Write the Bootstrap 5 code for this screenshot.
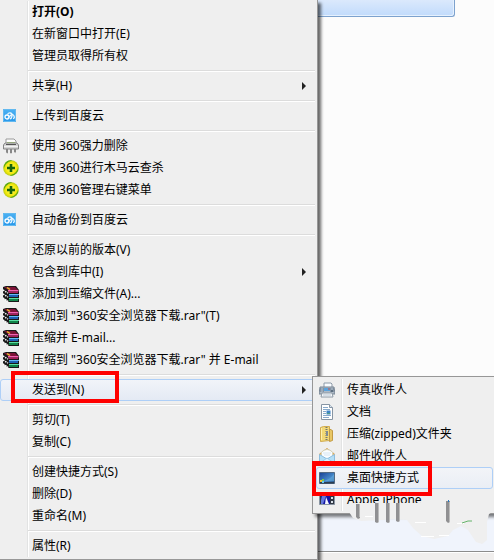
<!DOCTYPE html>
<html lang="zh-CN">
<head>
<meta charset="utf-8">
<meta name="viewport" content="width=device-width, initial-scale=1">
<title>右键菜单</title>
<link href="https://cdn.jsdelivr.net/npm/bootstrap@5.3.0/dist/css/bootstrap.min.css" rel="stylesheet">
<style>
body{font-family:"Noto Sans","Noto Sans CJK SC",sans-serif;font-size:12px;line-height:20px;color:#000;background:#fcfcfc;overflow:hidden}
.menu{background:#efefef;border-right:1px solid #979797;border-bottom:1px solid #979797;padding:1px 2px 2px 0;box-shadow:3px 3px 3px rgba(0,0,0,.6);flex:0 0 318px;z-index:2}
.gutter{background:linear-gradient(90deg,transparent 27px,#e2e3e3 27px,#e2e3e3 28px,#fff 28px,#fff 29px,transparent 29px)}
.entry{height:22px;padding:0 8px 0 0;color:#000;border:1px solid transparent;background:transparent;white-space:nowrap;text-align:left;border-radius:3px}
.entry .ico{width:31px;height:18px;padding-left:2px;flex:none;display:flex;align-items:center}
.entry.hot{border-color:#aecff7;background:linear-gradient(#f1f4f9,#e4eaf4)}
.rule{height:8px;padding:3px 0 0 28px}
.rule hr{margin:0;border:0;border-top:1px solid #dcdcdc;border-bottom:1px solid #fff;opacity:1}
.arrow{width:0;height:0;border:4px solid transparent;border-left-color:#222;border-right:0;margin-left:auto}
.picked{height:17px;margin-right:39px;border:1px solid #7da2ce;border-width:0 1px 1px 0;border-radius:0 0 3px 0;background:linear-gradient(#dbe9fc,#c1dbfc);box-shadow:inset -1px -1px 0 #e6f1fe}
.details{height:38px;background:#f0f4fc;border-bottom:1px solid #8c8c8c}
.status{height:8px;background:#f0eeed;border-top:1px solid #fff}
.flyout{top:379px;z-index:3}
.submenu{position:absolute;left:312px;top:-3px;right:-3px;background:#efefef;border:1px solid #979797;padding:2px 3px 2px;z-index:3;box-shadow:3px 3px 3px rgba(0,0,0,.5)}
.submenu .gutter{background:linear-gradient(90deg,transparent 25px,#e2e3e3 25px,#e2e3e3 26px,#fff 26px,#fff 27px,transparent 27px)}
.submenu .ico{width:30px}
.submenu .hot{background:linear-gradient(#f2f4f8,#eaeef5)}
.sendto{height:22px}
.callout{position:absolute;border:4px solid #f00;pointer-events:none;z-index:5}
.callout-send{left:11px;top:-8px;width:108px;height:32px}
.callout-desk{left:-1px;top:84px;width:120px;height:35px;border-width:5px 4px 4px}
.smear{position:absolute;left:31px;top:121px;z-index:4;pointer-events:none}
.symbols{width:0;height:0}
</style>
<script src="https://cdn.jsdelivr.net/npm/bootstrap@5.3.0/dist/js/bootstrap.bundle.min.js"></script>
</head>
<body>
<svg class="symbols position-absolute" aria-hidden="true">
<linearGradient id="gb" x2="0" y2="1"><stop stop-color="#4db2f3"/><stop offset="1" stop-color="#2797ea"/></linearGradient>
<linearGradient id="gs" x2="1" y2="1"><stop stop-color="#173f94"/><stop offset=".6" stop-color="#4689c9"/><stop offset="1" stop-color="#245082"/></linearGradient>
<radialGradient id="gy"><stop stop-color="#ffff65"/><stop offset=".7" stop-color="#f4e90d"/><stop offset="1" stop-color="#b8ca12"/></radialGradient>
<symbol id="cloud" viewBox="0 0 16 16"><path d="M0 1h13v13H0z" fill="url(#gb)"/><path d="M.5 1.500h12v12H.5z" fill="none" stroke="#63b9ef"/><circle cx="4" cy="9" r="2" fill="none" stroke="#fff" stroke-width="1.300"/><path d="M5 10l3-3q2-1.500 3 1t-1 2.500M4.500 6.500q1-2 3-1.500t1.500 3-2 3" fill="none" stroke="#e9f7ff" stroke-width="1.300"/></symbol>
<symbol id="shred" viewBox="0 0 16 16"><path d="M3 5V1h8l2 2v3" fill="#fff" stroke="#999"/><path d="M4 4h8v2H4z" fill="#a8c978"/><path d="M2 5h12l1.500 2v4H.5V7z" fill="#d6d6d6" stroke="#858585"/><path d="M1 8h14v1H1z" fill="#f4f4f4"/><path d="M3 6.500h10" stroke="#555"/><path d="M3.500 11v3q0 1 1 1V11m3 0v4h1v-4m3 0v3q1 1 1 0v-3" fill="#fff" stroke="#888"/></symbol>
<symbol id="safe" viewBox="0 0 16 16"><circle cx="8" cy="8" r="7.800" fill="url(#gy)"/><path d="M1.500 4.500Q4-.5 9.500.5 5 1.200 3 4t-2 4Q.5 6 1.500 4.500M14.500 11.500q-3 5-8 4 4.500-.7 6.500-3.500t2-4q.5 2-.5 3.500" fill="#4fa51d"/><path d="M6.700 4h2.600v2.700H12v2.600H9.300V12H6.700V9.300H4V6.700h2.700z" fill="#17640c"/></symbol>
<symbol id="books" viewBox="0 0 16 16"><path d="M0 1L3 0h10l3 4v12H6L0 12z" fill="#191919"/><path d="M1 1h11l3 3H5z" fill="#7d1238"/><path d="M5 4h10.500v1.500H5z" fill="#f062b0"/><path d="M5 5.500h10v1.500H6z" fill="#a71d5b"/><path d="M6 8h10v1H6z" fill="#66b8f4"/><path d="M6 9h9v2H6z" fill="#1d62b4"/><path d="M6 12h10v1H6z" fill="#5bdca2"/><path d="M6 13h9v2H6z" fill="#108449"/><path d="M0 4l5 3M0 8l5 3M0 12l5 3" stroke="#fff" stroke-width="1.500" stroke-dasharray="1.500 1"/><path d="M4 1.500l3 2" stroke="#e7c62a" stroke-width="1.500"/></symbol>
<symbol id="fax" viewBox="0 0 16 16"><path d="M5 1h7l1 1v5H5z" fill="#f9fcff" stroke="#8d9aa8"/><path d="M1 5h14l1 7H0z" fill="#aeb9c5" stroke="#778594"/><path d="M1.500 6h3v4h-3zM11.500 6h3v4h-3z" fill="#5c6f81"/><path d="M2 7h2m-2 2h2m8-2h2" stroke="#dce8f3"/><path d="M5 6h6v3H5z" fill="#5ba4de"/><path d="M9 7h2" stroke="#d15045"/><path d="M3 11h10l1 4H2z" fill="#f8fafc" stroke="#8e9aa6"/><path d="M4 13h8" stroke="#b5c4d2"/></symbol>
<symbol id="doc" viewBox="0 0 16 16"><path d="M2.500.5h8l3 3v12h-11z" fill="#fff" stroke="#8795a4"/><path d="M10.500.5v3h3" fill="#dae5ef" stroke="#8795a4"/><path d="M4 3.500h5M4 5.500h7M4 7.500h3M4 9.500h3M4 11.500h8M4 13.500h6" stroke="#88a9ca"/><path d="M7.500 6.500h4v4h-4z" fill="#3c83c5"/><path d="M8 9h3v1H8z" fill="#4a9b88"/></symbol>
<symbol id="zip" viewBox="0 0 16 16"><path d="M1.500 1.500l3-1h6v14l-9 1z" fill="#f2d875" stroke="#d0ab50"/><path d="M10.500 3l3 1.500v10l-3 1z" fill="#e9c765" stroke="#c29b45"/><path d="M2.500 2v12" stroke="#fff0ac"/><path d="M7.500 1v14" stroke="#77786f" stroke-width="2" stroke-dasharray="1 1"/><path d="M7 5h2v5H7z" fill="#808b92"/></symbol>
<symbol id="mail" viewBox="0 0 16 16"><path d="M.5 6L8 .5 15.500 6v9H.5z" fill="#f0bd68" stroke="#d8a352"/><path d="M2.500 4Q8-1 13.500 4v7h-11z" fill="#fbfdff" stroke="#d5d2b9"/><path d="M4 5h8M5 7h6" stroke="#d5e6f3"/><path d="M.5 6.500L8 11l7.500-4.500v9H.5z" fill="#b5dff6" stroke="#8cbddf"/><path d="M1 15l7-5 7 5" fill="#d8effe" stroke="#9acae7"/></symbol>
<symbol id="desk" viewBox="0 0 16 16"><path d="M.5 2.500h15v11H.5z" fill="url(#gs)" stroke="#526a83"/><path d="M5 11Q12 9 15 4v7z" fill="#67aee0" opacity=".6"/><path d="M1 12h14v1.500H1z" fill="#2c3d51"/><path d="M1 10h2v2H1z" fill="#efbc31"/><path d="M3 9h2v2H3z" fill="#79ca50"/><path d="M3 11h2v2H3z" fill="#62c7f2"/></symbol>
<symbol id="phone" viewBox="0 0 16 16"><path d="M.5 3.500h15v9H.5z" fill="#303744" stroke="#8995a3"/><path d="M2 4h9v8H2z" fill="#1414a3"/><path d="M3 4h4l-3 8H2V8z" fill="#6578dc"/><path d="M7 5l3 7H6z" fill="#f4f7ff"/><path d="M12 5h2v2h-2zM12 9h2v2h-2z" fill="#dbe2ea"/></symbol>
</svg>
<div class="d-flex min-vh-100 position-relative">
<nav class="menu" aria-label="文件菜单">
<div class="gutter">
<button type="button" class="entry d-flex align-items-center w-100 fw-bold"><span class="ico"></span>打开(O)</button>
<button type="button" class="entry d-flex align-items-center w-100"><span class="ico"></span>在新窗口中打开(E)</button>
<button type="button" class="entry d-flex align-items-center w-100"><span class="ico"></span>管理员取得所有权</button>
<div class="rule"><hr></div>
<button type="button" class="entry d-flex align-items-center w-100"><span class="ico"></span>共享(H)<span class="arrow"></span></button>
<div class="rule"><hr></div>
<button type="button" class="entry d-flex align-items-center w-100"><span class="ico"><svg width="16" height="16"><use href="#cloud"/></svg></span>上传到百度云</button>
<div class="rule"><hr></div>
<button type="button" class="entry d-flex align-items-center w-100"><span class="ico"><svg width="16" height="16"><use href="#shred"/></svg></span>使用 360强力删除</button>
<button type="button" class="entry d-flex align-items-center w-100"><span class="ico"><svg width="16" height="16"><use href="#safe"/></svg></span>使用 360进行木马云查杀</button>
<button type="button" class="entry d-flex align-items-center w-100"><span class="ico"><svg width="16" height="16"><use href="#safe"/></svg></span>使用 360管理右键菜单</button>
<div class="rule"><hr></div>
<button type="button" class="entry d-flex align-items-center w-100"><span class="ico"><svg width="16" height="16"><use href="#cloud"/></svg></span>自动备份到百度云</button>
<div class="rule"><hr></div>
<button type="button" class="entry d-flex align-items-center w-100"><span class="ico"></span>还原以前的版本(V)</button>
<button type="button" class="entry d-flex align-items-center w-100"><span class="ico"></span>包含到库中(I)<span class="arrow"></span></button>
<button type="button" class="entry d-flex align-items-center w-100"><span class="ico"><svg width="16" height="16"><use href="#books"/></svg></span>添加到压缩文件(A)...</button>
<button type="button" class="entry d-flex align-items-center w-100"><span class="ico"><svg width="16" height="16"><use href="#books"/></svg></span>添加到 "360安全浏览器下载.rar"(T)</button>
<button type="button" class="entry d-flex align-items-center w-100"><span class="ico"><svg width="16" height="16"><use href="#books"/></svg></span>压缩并 E-mail...</button>
<button type="button" class="entry d-flex align-items-center w-100"><span class="ico"><svg width="16" height="16"><use href="#books"/></svg></span>压缩到 "360安全浏览器下载.rar" 并 E-mail</button>
<div class="rule"><hr></div>
<div class="sendto"><button type="button" class="entry hot d-flex align-items-center w-100" aria-expanded="true"><span class="ico"></span>发送到(N)<span class="arrow"></span></button></div>
<div class="rule"><hr></div>
<button type="button" class="entry d-flex align-items-center w-100"><span class="ico"></span>剪切(T)</button>
<button type="button" class="entry d-flex align-items-center w-100"><span class="ico"></span>复制(C)</button>
<div class="rule"><hr></div>
<button type="button" class="entry d-flex align-items-center w-100"><span class="ico"></span>创建快捷方式(S)</button>
<button type="button" class="entry d-flex align-items-center w-100"><span class="ico"></span>删除(D)</button>
<button type="button" class="entry d-flex align-items-center w-100"><span class="ico"></span>重命名(M)</button>
<div class="rule"><hr></div>
<button type="button" class="entry d-flex align-items-center w-100"><span class="ico"></span>属性(R)</button>
</div>
</nav>
<main class="flex-fill d-flex flex-column">
<div class="picked"></div>
<div class="flex-fill"></div>
<div class="details"></div>
<div class="status"></div>
</main>
<div class="flyout position-absolute start-0 end-0">
<div class="submenu">
<div class="gutter">
<button type="button" class="entry d-flex align-items-center w-100"><span class="ico"><svg width="16" height="16"><use href="#fax"/></svg></span>传真收件人</button>
<button type="button" class="entry d-flex align-items-center w-100"><span class="ico"><svg width="16" height="16"><use href="#doc"/></svg></span>文档</button>
<button type="button" class="entry d-flex align-items-center w-100"><span class="ico"><svg width="16" height="16"><use href="#zip"/></svg></span>压缩(zipped)文件夹</button>
<button type="button" class="entry d-flex align-items-center w-100"><span class="ico"><svg width="16" height="16"><use href="#mail"/></svg></span>邮件收件人</button>
<button type="button" class="entry hot d-flex align-items-center w-100"><span class="ico"><svg width="16" height="16"><use href="#desk"/></svg></span>桌面快捷方式</button>
<button type="button" class="entry d-flex align-items-center w-100"><span class="ico"><svg width="16" height="16"><use href="#phone"/></svg></span>Apple iPhone</button>
</div>
<svg class="smear" width="151" height="56" viewBox="344 498 151 56" aria-hidden="true">
<path d="M350 503h144v8l-5 3-2 8v18l-5 4-6-2-8-12-7-4-8 4-5 6-14 3-12-3-9-8-6-8-14-1-12 1-20 1-8-3-4-6-1-3z" fill="#efefef"/>
<g fill="#909092"><path d="M356 504h4v14l-2 1-2-2zM375 503h4v19l-2 1-2-1zM386 503h4v19l-2 1-2-1zM396 503h4v18l-2 1-2-1zM446 501h4v21l-2 1-2-2z"/></g>
<path d="M359.500 504v13M378.500 503v19M389.500 503v19M399.500 503v18M449.500 502v20" stroke="#bbb"/>
<path d="M415 522.500h11M421 536.500h13M439 535.500h10M457 523.500h7M365 516.500h8" stroke="#fff"/>
<path d="M462 523l6-2h4" stroke="#64b46a" fill="none"/>
<path d="M448 501h1" stroke="#297bc4" stroke-width="2"/>
</svg>
<div class="callout callout-desk"></div>
</div>
<div class="callout callout-send"></div>
</div>
</div>
</body>
</html>
